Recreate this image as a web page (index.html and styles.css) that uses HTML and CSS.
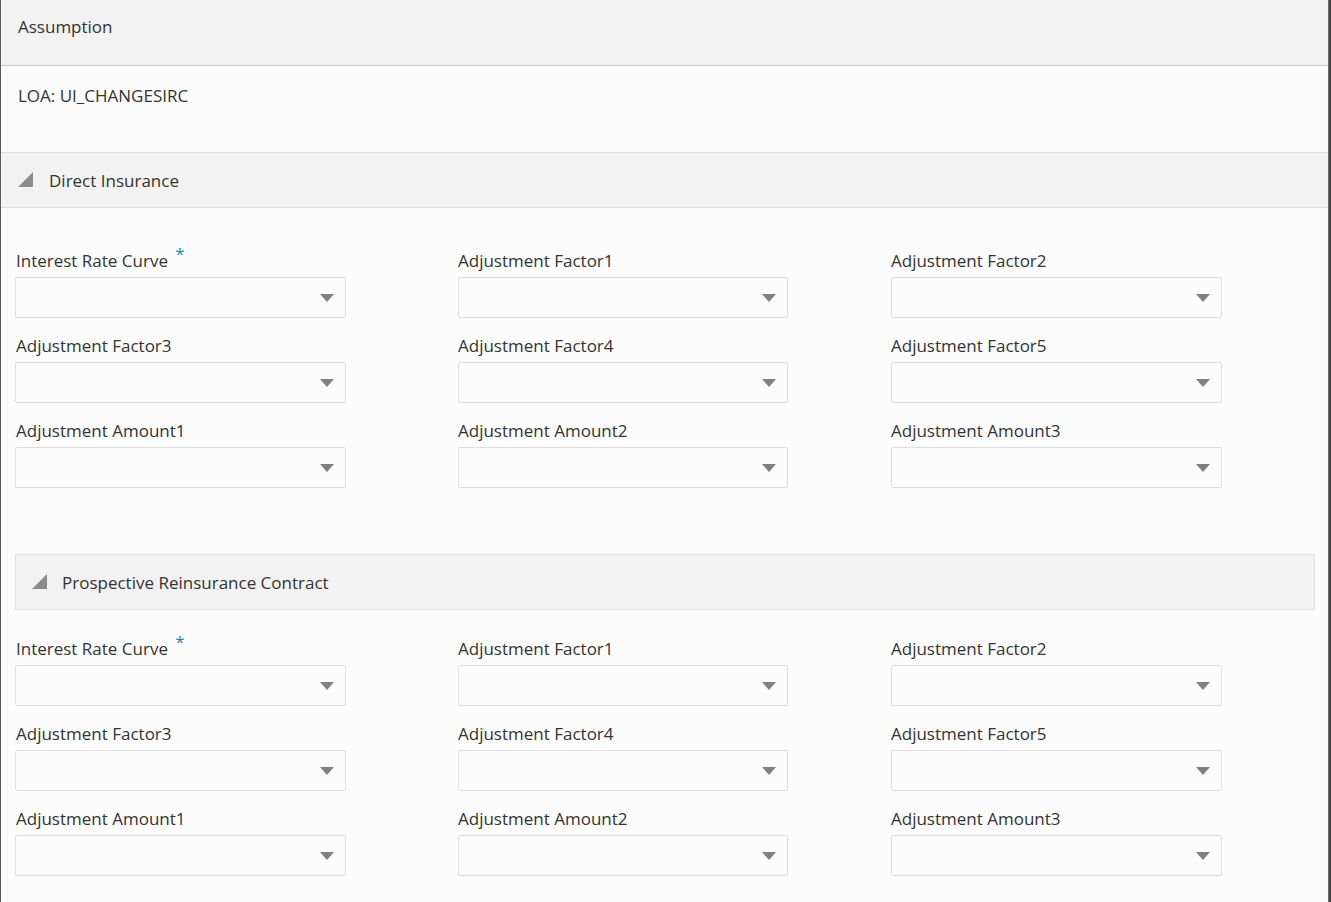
FILE: index.html
```html
<!DOCTYPE html>
<html lang="en">
<head>
<meta charset="utf-8">
<title>Assumption</title>
<link rel="stylesheet" href="styles.css">
</head>
<body>
<div class="panel">
  <div class="titlebar">Assumption</div>
  <div class="loa">LOA: UI_CHANGESIRC</div>

  <div class="section-head full"><span class="tri"></span><span>Direct Insurance</span></div>
  <div class="grid first">
    <div class="field"><label class="lbl">Interest Rate Curve <span class="req">*</span></label><div class="sel"><span class="caret"></span></div></div>
    <div class="field"><label class="lbl">Adjustment Factor1</label><div class="sel"><span class="caret"></span></div></div>
    <div class="field"><label class="lbl">Adjustment Factor2</label><div class="sel"><span class="caret"></span></div></div>
    <div class="field"><label class="lbl">Adjustment Factor3</label><div class="sel"><span class="caret"></span></div></div>
    <div class="field"><label class="lbl">Adjustment Factor4</label><div class="sel"><span class="caret"></span></div></div>
    <div class="field"><label class="lbl">Adjustment Factor5</label><div class="sel"><span class="caret"></span></div></div>
    <div class="field"><label class="lbl">Adjustment Amount1</label><div class="sel"><span class="caret"></span></div></div>
    <div class="field"><label class="lbl">Adjustment Amount2</label><div class="sel"><span class="caret"></span></div></div>
    <div class="field"><label class="lbl">Adjustment Amount3</label><div class="sel"><span class="caret"></span></div></div>
  </div>

  <div class="section-head boxed"><span class="tri"></span><span>Prospective Reinsurance Contract</span></div>
  <div class="grid second">
    <div class="field"><label class="lbl">Interest Rate Curve <span class="req">*</span></label><div class="sel"><span class="caret"></span></div></div>
    <div class="field"><label class="lbl">Adjustment Factor1</label><div class="sel"><span class="caret"></span></div></div>
    <div class="field"><label class="lbl">Adjustment Factor2</label><div class="sel"><span class="caret"></span></div></div>
    <div class="field"><label class="lbl">Adjustment Factor3</label><div class="sel"><span class="caret"></span></div></div>
    <div class="field"><label class="lbl">Adjustment Factor4</label><div class="sel"><span class="caret"></span></div></div>
    <div class="field"><label class="lbl">Adjustment Factor5</label><div class="sel"><span class="caret"></span></div></div>
    <div class="field"><label class="lbl">Adjustment Amount1</label><div class="sel"><span class="caret"></span></div></div>
    <div class="field"><label class="lbl">Adjustment Amount2</label><div class="sel"><span class="caret"></span></div></div>
    <div class="field"><label class="lbl">Adjustment Amount3</label><div class="sel"><span class="caret"></span></div></div>
  </div>
</div>
</body>
</html>
```

FILE: styles.css
```css
html, body {
  margin: 0;
  padding: 0;
  background: #4a4a4a;
  height: 100%;
  overflow: hidden;
}
.panel {
  width: 1327px;
  height: 902px;
  background: #fcfcfc;
  border-left: 1px solid #5a5a5a;
  border-right: 1px solid #6a6a6a;
  font-family: "Open Sans", "Noto Sans", sans-serif;
  font-size: 17px;
  color: #333;
  overflow: hidden;
}
.titlebar {
  height: 66px;
  box-sizing: border-box;
  background: #f2f2f2;
  border-bottom: 1px solid #c8c8c8;
  padding: 0 17px 12px;
  display: flex;
  align-items: center;
  line-height: 22px;
}
.loa {
  height: 86px;
  box-sizing: border-box;
  padding: 19px 17px 0;
  line-height: 22px;
}
.section-head {
  height: 56px;
  box-sizing: border-box;
  background: #f2f2f2;
  display: flex;
  align-items: center;
  gap: 16px;
  font-size: 17px;
}
.section-head.full {
  border-top: 1px solid #e2e2e2;
  border-bottom: 1px solid #e2e2e2;
  padding-left: 17px;
}
.section-head.boxed {
  margin: 0 13px 0 14px;
  border: 1px solid #e2e2e2;
  padding-left: 16px;
  gap: 15px;
}
.tri {
  width: 0;
  height: 0;
  border-style: solid;
  border-width: 0 0 15px 15px;
  border-color: transparent transparent #8c8c8c transparent;
  margin-bottom: 2px;
}
.grid {
  display: grid;
  grid-template-columns: 443px 433px 331px;
  padding-left: 14px;
  row-gap: 17px;
}
.grid.first {
  padding-top: 42px;
  padding-bottom: 66px;
}
.grid.second {
  padding-top: 28px;
}
.field {
  display: flex;
  flex-direction: column;
  width: 331px;
}
.field:nth-child(3n+2) { width: 330px; }
.lbl {
  font-size: 17px;
  line-height: 22px;
  height: 27px;
  color: #333;
}
.field:nth-child(3n+1) .lbl { padding-left: 1px; }
.req {
  color: #2c7fb8;
  position: relative;
  top: -7px;
  margin-left: 3px;
}
.sel {
  height: 41px;
  box-sizing: border-box;
  border: 1px solid #dedede;
  border-radius: 2px;
  background: #fcfcfc;
  display: flex;
  align-items: center;
  justify-content: flex-end;
  padding-right: 11px;
}
.caret {
  width: 0;
  height: 0;
  border-left: 7px solid transparent;
  border-right: 7px solid transparent;
  border-top: 8px solid #808080;
}
```
